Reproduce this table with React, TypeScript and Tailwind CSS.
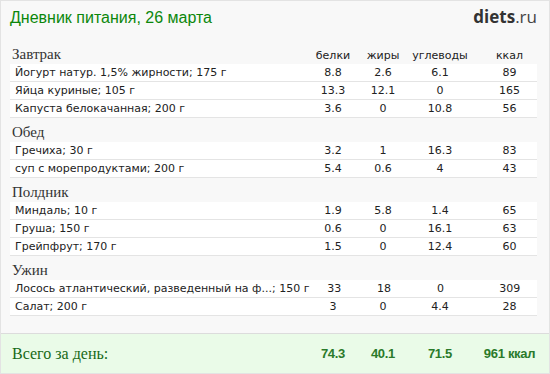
import React from 'react';

type Item = { name: string; p: string; f: string; c: string; k: string };
type Meal = { title: string; items: Item[] };

const meals: Meal[] = [
  {
    title: 'Завтрак',
    items: [
      { name: 'Йогурт натур. 1,5% жирности; 175 г', p: '8.8', f: '2.6', c: '6.1', k: '89' },
      { name: 'Яйца куриные; 105 г', p: '13.3', f: '12.1', c: '0', k: '165' },
      { name: 'Капуста белокачанная; 200 г', p: '3.6', f: '0', c: '10.8', k: '56' },
    ],
  },
  {
    title: 'Обед',
    items: [
      { name: 'Гречиха; 30 г', p: '3.2', f: '1', c: '16.3', k: '83' },
      { name: 'суп с морепродуктами; 200 г', p: '5.4', f: '0.6', c: '4', k: '43' },
    ],
  },
  {
    title: 'Полдник',
    items: [
      { name: 'Миндаль; 10 г', p: '1.9', f: '5.8', c: '1.4', k: '65' },
      { name: 'Груша; 150 г', p: '0.6', f: '0', c: '16.1', k: '63' },
      { name: 'Грейпфрут; 170 г', p: '1.5', f: '0', c: '12.4', k: '60' },
    ],
  },
  {
    title: 'Ужин',
    items: [
      { name: 'Лосось атлантический, разведенный на ф...; 150 г', p: '33', f: '18', c: '0', k: '309' },
      { name: 'Салат; 200 г', p: '3', f: '0', c: '4.4', k: '28' },
    ],
  },
];

const sans = { fontFamily: '"DejaVu Sans", Verdana, sans-serif' };
const serif = { fontFamily: '"Liberation Serif", "Times New Roman", serif' };

const Cols: React.FC<{ p: string; f: string; c: string; k: string; className?: string }> = ({ p, f, c, k, className }) => (
  <>
    <div className={`w-[50px] text-center ${className ?? ''}`}>{p}</div>
    <div className={`w-[50px] text-center ${className ?? ''}`}>{f}</div>
    <div className={`w-[64px] text-center ${className ?? ''}`}>{c}</div>
    <div className={`w-[65px] pl-[10px] text-center ${className ?? ''}`}>{k}</div>
  </>
);

export default function App() {
  return (
    <div className="w-[550px] h-[374px] border border-[#e3e3e3] bg-[#f8f8f8] flex flex-col overflow-hidden">
      {/* шапка */}
      <div className="h-[39px] flex items-baseline justify-between pl-[9px] pr-[12px] pt-[6px]">
        <div
          className="text-[16px] leading-[20px] text-[#0b870b]"
          style={{ fontFamily: '"Liberation Sans", Arial, sans-serif' }}
        >
          Дневник питания, 26 марта
        </div>
        <div className="text-[17px] leading-[20px]" style={{ fontFamily: '"Open Sans", sans-serif' }}>
          <span className="font-bold text-[#333]">diets</span>
          <span className="text-[#444]">.ru</span>
        </div>
      </div>

      {/* таблица */}
      <div className="pl-[9px] pr-[12px]">
        {meals.map((meal, i) => (
          <div key={meal.title}>
            <div className="h-[24px] pt-[7px] flex items-baseline">
              <div className="flex-1 pl-[2px] text-[15px] leading-[15px] text-[#333]" style={serif}>
                {meal.title}
              </div>
              {i === 0 && (
                <div className="flex text-[11px] leading-[15px] text-[#222]" style={sans}>
                  <Cols p="белки" f="жиры" c="углеводы" k="ккал" />
                </div>
              )}
            </div>
            {meal.items.map((it) => (
              <div
                key={it.name}
                className="h-[18px] bg-white border-b border-[#e4e4e4] flex items-center text-[11px] leading-[17px] text-[#222]"
                style={sans}
              >
                <div className="flex-1 pl-[5px] whitespace-nowrap">{it.name}</div>
                <Cols p={it.p} f={it.f} c={it.c} k={it.k} />
              </div>
            ))}
          </div>
        ))}
      </div>

      <div className="flex-1" />

      {/* итого */}
      <div className="h-[40px] border-t border-[#dcdcdc] bg-[#eafbe8] flex items-center pl-[11px] pr-[12px]">
        <div className="flex-1 text-[16px] leading-[18px] text-[#176a17]" style={serif}>
          Всего за день:
        </div>
        <div
          className="flex text-[13px] leading-[16px] font-bold text-[#2a7a2a] tracking-[-0.3px]"
          style={{ fontFamily: '"Liberation Sans", Arial, sans-serif' }}
        >
          <Cols p="74.3" f="40.1" c="71.5" k="961 ккал" />
        </div>
      </div>
    </div>
  );
}
